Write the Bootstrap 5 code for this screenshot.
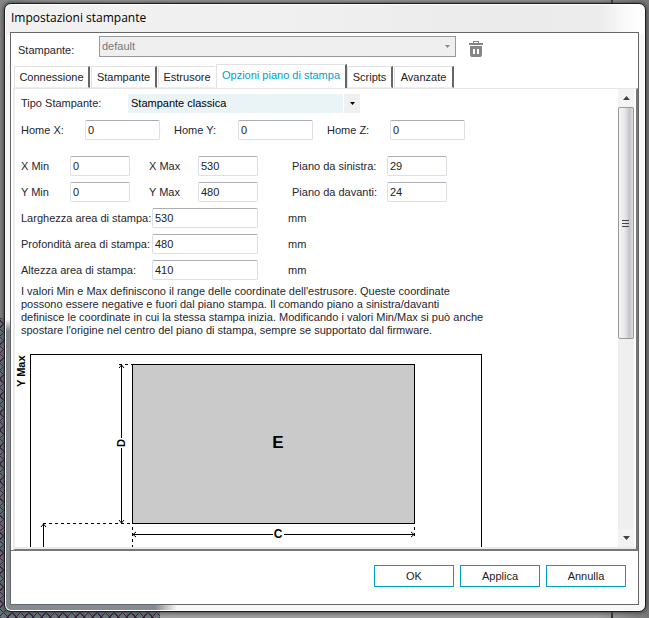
<!DOCTYPE html>
<html lang="it">
<head>
<meta charset="utf-8">
<meta name="viewport" content="width=device-width, initial-scale=1">
<title>Impostazioni stampante</title>
<link href="https://cdn.jsdelivr.net/npm/bootstrap@5.3.0/dist/css/bootstrap.min.css" rel="stylesheet">
<style>
body { font: 11px/13px "Liberation Sans", Arial, sans-serif; color: #26262e; background: #8f8f8f; }
.desktop { height: 100vh; padding: 3px 3px 6px 4px;
  background:
    linear-gradient(#333, #333) right 36px top 0 / 2px 100% no-repeat,
    repeating-linear-gradient(45deg, #3b1d42 0 1px, transparent 1px 6px) left bottom / 160px 300px no-repeat,
    repeating-linear-gradient(-45deg, #3b1d42 0 1px, transparent 1px 6px) left bottom / 160px 300px no-repeat,
    linear-gradient(#66757a, #66757a) left bottom / 160px 300px no-repeat,
    linear-gradient(90deg, #858585, #a2a2a2 8%, #a2a2a2 92%, #777); }
.window { border: 1px solid #1c1c1c; border-radius: 7px; padding: 0 6px 6px 5px; min-height: 0;
  box-shadow: 0 0 4px 1px #444, inset 0 0 0 1px #fff;
  background:
    linear-gradient(90deg, #848b94 150px, transparent 172px) left bottom / 100% 7px no-repeat,
    linear-gradient(#84899300, #848993 12px) left bottom / 6px 292px no-repeat,
    linear-gradient(90deg, #f1f1f1 0, #f0f0f0 42%, #ebebeb 78%, #ececec 93%, #fafafa 97%, #fff) 0 0 / 100% 30px no-repeat,
    #f7f7f7; }
.title-bar { font: 12px/16px "Open Sans", "Noto Sans", sans-serif; color: #000; height: 28px; padding: 6px 1px; }
.client { border: 1px solid #666; background: #fff; min-height: 0; }
.printer-row { height: 31px; padding: 3px 7px 0; }
.printer-name { width: 81px; }
.printer-pick { width: 357px; height: 21px; border: 1px solid #999; background: #efefef; margin-right: 13px; padding-right: 5px; }
.plain { appearance: none; border: 0; background: transparent; font: inherit; padding: 0 3px; outline: 0; }
.printer-pick select { color: #777; opacity: 1; padding: 0 2px; }
.icon-btn { border: 0; background: none; padding: 0; line-height: 0; }
.tabs { margin: 0 0 0 3px; height: 24px; }
.tabs button { font: inherit; color: #222; background: #fff; border: 1px solid #e2e2e2; border-right: 2px solid #666; height: 22px; padding: 0 4px; margin-right: 1px; white-space: nowrap; border-bottom-color: #ededed; }
.tabs .w-a { width: 76px; } .tabs .w-b { width: 66px; } .tabs .w-c { width: 57px; border-right: 0; }
.tabs .w-e { width: 46px; } .tabs .w-f { width: 60px; }
.tabs button.current { width: 131px; height: 24px; color: #009fc9; border-bottom: 0; margin-right: 0; padding-bottom: 2px; }
.sheet { border: 1px solid #e6e6e6; border-left: 2px solid #ececec; border-right: 2px solid #777; border-bottom: 1px solid #777; box-shadow: inset 0 -2px #eaeaea; margin-left: 2px; min-height: 0; padding-bottom: 2px; }
.fields { padding: 5px 0 0 6px; overflow: hidden; min-height: 0; }
.type-row { height: 19px; margin-bottom: 7px; }
.type-name { width: 107px; }
.type-pick { width: 215px; height: 19px; background: #eaf4f7; color: #000; }
.type-arrow { width: 16px; height: 19px; background: #f0f0f0; margin-left: 1px; }
.fields input { font: inherit; color: #222; height: 20px; padding: 0 2px; border: 1px solid #dcdfe6; border-top-color: #abadb3; border-radius: 2px; min-width: 0; }
.fields label { white-space: nowrap; }
.line { display: grid; align-items: center; }
.home { grid-template-columns: 64px 75px 78px 75px 77px 75px; margin-bottom: 16px; }
.home label:nth-of-type(n+2) { padding-left: 14px; }
.limits { grid-template-columns: 49px 60px 68px 60px 129px 60px; row-gap: 6px; margin-bottom: 6px; }
.limits .mid { padding-left: 19px; } .limits .far { padding-left: 34px; }
.sizes { grid-template-columns: 131px 106px 60px; row-gap: 6px; margin-bottom: 5px; }
.sizes .unit { padding-left: 30px; }
.note { margin: 0 0 13px; white-space: nowrap; }
.plan { display: block; margin-left: -6px; flex: none; }
.plan text { font-family: "Liberation Sans", Arial, sans-serif; font-weight: bold; fill: #000; }
.scroller { width: 16px; background: #efefef; margin-right: 2px; }
.scroller button { border: 0; background: #f3f3f3; height: 18px; padding: 0; line-height: 0; }
.thumb { height: 232px; border: 1px solid #999; border-radius: 2px; background: linear-gradient(90deg, #f4f4f4, #e9e9eb 40%, #c4c4ca 75%, #dcdce0); }
.actions { height: 54px; padding: 14px 12px 0; gap: 6px; border-top: 1px solid #777; }
.actions button { width: 80px; height: 22px; font: inherit; color: #222; background: #fff; border: 1px solid #009fc3; padding: 0; }
</style>
<script src="https://cdn.jsdelivr.net/npm/bootstrap@5.3.0/dist/js/bootstrap.bundle.min.js"></script>
</head>
<body>
<div class="desktop d-flex flex-column">
<main class="window d-flex flex-column flex-grow-1">
  <header class="title-bar flex-shrink-0">Impostazioni stampante</header>
  <form class="client d-flex flex-column flex-grow-1">
    <div class="printer-row d-flex align-items-start flex-shrink-0">
      <label class="printer-name pt-2" for="printer">Stampante:</label>
      <div class="printer-pick d-flex align-items-center">
        <select class="plain flex-grow-1" id="printer" disabled><option>default</option></select>
        <svg width="5" height="3" aria-hidden="true"><path d="M0 0h5L2.500 3z" fill="#888"/></svg>
      </div>
      <button class="icon-btn" type="button" aria-label="Elimina">
        <svg width="14" height="21" viewBox="0 0 14 21"><g fill="#858585" fill-rule="evenodd"><path d="M4 7V5h6v2h4v2H0V7h4zm1 0h4V6H5z"/><path d="M1 10h12v9a2 2 0 0 1-2 2H3a2 2 0 0 1-2-2zm3 3v5h2v-5zm4 0v5h2v-5z"/></g></svg>
      </button>
    </div>
    <div class="tabs d-flex align-items-end flex-shrink-0" role="tablist">
      <button type="button" role="tab" class="w-a">Connessione</button>
      <button type="button" role="tab" class="w-b">Stampante</button>
      <button type="button" role="tab" class="w-c">Estrusore</button>
      <button type="button" role="tab" class="current" aria-selected="true">Opzioni piano di stampa</button>
      <button type="button" role="tab" class="w-e">Scripts</button>
      <button type="button" role="tab" class="w-f">Avanzate</button>
    </div>
    <section class="sheet d-flex flex-grow-1">
      <div class="fields d-flex flex-column flex-grow-1">
        <div class="type-row d-flex align-items-center flex-shrink-0">
          <label class="type-name" for="kind">Tipo Stampante:</label>
          <select class="plain type-pick" id="kind"><option>Stampante classica</option></select>
          <span class="type-arrow d-flex align-items-center justify-content-center"><svg width="5" height="3" aria-hidden="true"><path d="M0 0h5L2.500 3z" fill="#000"/></svg></span>
        </div>
        <div class="line home">
          <label for="hx">Home X:</label><input id="hx" value="0">
          <label for="hy">Home Y:</label><input id="hy" value="0">
          <label for="hz">Home Z:</label><input id="hz" value="0">
        </div>
        <div class="line limits">
          <label for="x0">X Min</label><input id="x0" value="0">
          <label class="mid" for="x1">X Max</label><input id="x1" value="530">
          <label class="far" for="pl">Piano da sinistra:</label><input id="pl" value="29">
          <label for="y0">Y Min</label><input id="y0" value="0">
          <label class="mid" for="y1">Y Max</label><input id="y1" value="480">
          <label class="far" for="pf">Piano da davanti:</label><input id="pf" value="24">
        </div>
        <div class="line sizes">
          <label for="sw">Larghezza area di stampa:</label><input id="sw" value="530"><span class="unit">mm</span>
          <label for="sd">Profondità area di stampa:</label><input id="sd" value="480"><span class="unit">mm</span>
          <label for="sh">Altezza area di stampa:</label><input id="sh" value="410"><span class="unit">mm</span>
        </div>
        <p class="note">I valori Min e Max definiscono il range delle coordinate dell'estrusore. Queste coordinate<br>possono essere negative e fuori dal piano stampa. Il comando piano a sinistra/davanti<br>definisce le coordinate in cui la stessa stampa inizia. Modificando i valori Min/Max si può anche<br>spostare l'origine nel centro del piano di stampa, sempre se supportato dal firmware.</p>
        <svg class="plan" width="470" height="260" viewBox="15 350 470 260" role="img" aria-label="Schema del piano di stampa">
          <g fill="none" stroke="#000" shape-rendering="crispEdges">
            <path d="M30.500 608V354.500H481.500V608"/>
            <rect x="132.500" y="364.500" width="282" height="159" fill="#cacaca"/>
            <path d="M121.500 365V438M121.500 448V523M43.500 524V608M133 534.500H273M284 534.500H414"/>
            <path d="M43 523.500H132M132.500 527V608M119 364.500H132M414.500 527V536" stroke-dasharray="3 3"/>
          </g>
          <g fill="none" stroke="#000">
            <path d="M119 368l2.500-3 2.500 3M119 520l2.500 3 2.500-3M41 527l2.500-3 2.500 3M136 532l-3 2.500 3 2.500M411 532l3 2.500-3 2.500"/>
          </g>
          <text x="278" y="448" font-size="17" text-anchor="middle">E</text>
          <text x="278" y="538" font-size="12" text-anchor="middle">C</text>
          <text transform="translate(125 443) rotate(-90)" font-size="11" text-anchor="middle">D</text>
          <text transform="translate(25 387) rotate(-90)" font-size="11">Y Max</text>
        </svg>
      </div>
      <div class="scroller d-flex flex-column flex-shrink-0">
        <button type="button" aria-label="Scorri su"><svg width="7" height="4"><path d="M0 4h7L3.500 0z" fill="#444"/></svg></button>
        <div class="thumb d-flex align-items-center justify-content-center"><svg width="8" height="9" aria-hidden="true"><path d="M0 1.500h7M0 4.500h7M0 7.500h7" stroke="#444"/></svg></div>
        <button class="mt-auto" type="button" aria-label="Scorri giù"><svg width="7" height="4"><path d="M0 0h7L3.500 4z" fill="#444"/></svg></button>
      </div>
    </section>
    <div class="actions d-flex justify-content-end flex-shrink-0">
      <button type="button">OK</button>
      <button type="button">Applica</button>
      <button type="button">Annulla</button>
    </div>
  </form>
</main>
</div>
</body>
</html>
